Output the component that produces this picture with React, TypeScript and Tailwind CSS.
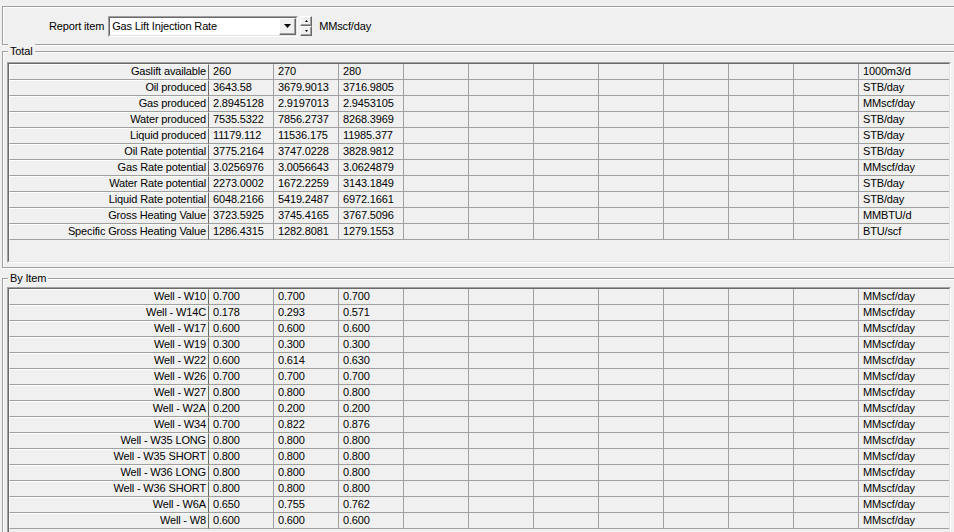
import React from "react"

const TOTAL_ROWS = [
    { label: "Gaslift available", values: ["260", "270", "280"], unit: "1000m3/d" },
    { label: "Oil produced", values: ["3643.58", "3679.9013", "3716.9805"], unit: "STB/day" },
    { label: "Gas produced", values: ["2.8945128", "2.9197013", "2.9453105"], unit: "MMscf/day" },
    { label: "Water produced", values: ["7535.5322", "7856.2737", "8268.3969"], unit: "STB/day" },
    { label: "Liquid produced", values: ["11179.112", "11536.175", "11985.377"], unit: "STB/day" },
    { label: "Oil Rate potential", values: ["3775.2164", "3747.0228", "3828.9812"], unit: "STB/day" },
    { label: "Gas Rate potential", values: ["3.0256976", "3.0056643", "3.0624879"], unit: "MMscf/day" },
    { label: "Water Rate potential", values: ["2273.0002", "1672.2259", "3143.1849"], unit: "STB/day" },
    { label: "Liquid Rate potential", values: ["6048.2166", "5419.2487", "6972.1661"], unit: "STB/day" },
    { label: "Gross Heating Value", values: ["3723.5925", "3745.4165", "3767.5096"], unit: "MMBTU/d" },
    { label: "Specific Gross Heating Value", values: ["1286.4315", "1282.8081", "1279.1553"], unit: "BTU/scf" },
]

const ITEM_ROWS = [
    { label: "Well - W10", values: ["0.700", "0.700", "0.700"] },
    { label: "Well - W14C", values: ["0.178", "0.293", "0.571"] },
    { label: "Well - W17", values: ["0.600", "0.600", "0.600"] },
    { label: "Well - W19", values: ["0.300", "0.300", "0.300"] },
    { label: "Well - W22", values: ["0.600", "0.614", "0.630"] },
    { label: "Well - W26", values: ["0.700", "0.700", "0.700"] },
    { label: "Well - W27", values: ["0.800", "0.800", "0.800"] },
    { label: "Well - W2A", values: ["0.200", "0.200", "0.200"] },
    { label: "Well - W34", values: ["0.700", "0.822", "0.876"] },
    { label: "Well - W35 LONG", values: ["0.800", "0.800", "0.800"] },
    { label: "Well - W35 SHORT", values: ["0.800", "0.800", "0.800"] },
    { label: "Well - W36 LONG", values: ["0.800", "0.800", "0.800"] },
    { label: "Well - W36 SHORT", values: ["0.800", "0.800", "0.800"] },
    { label: "Well - W6A", values: ["0.650", "0.755", "0.762"] },
    { label: "Well - W8", values: ["0.600", "0.600", "0.600"] },
].map((r) => ({ ...r, unit: "MMscf/day" }))

type Row = { label: string; values: string[]; unit: string }

function GridRow({ row }: { row: Row }) {
    const cells = Array.from({ length: 10 }, (_, i) => row.values[i] ?? "")
    return (
        <div className="flex h-[16px]">
            <div className="w-[200px] h-[16px] shrink-0 border-t border-l border-b border-r border-t-white border-l-white border-b-[#a0a0a0] border-r-[#696969] text-right pr-[2px] leading-[13px] whitespace-nowrap">
                {row.label}
            </div>
            {cells.map((v, i) => (
                <div key={i} className="w-[65px] h-[16px] shrink-0 border-r border-b border-[#a0a0a0] pl-[4px] leading-[14px]">
                    {v}
                </div>
            ))}
            <div className="w-[90px] h-[16px] shrink-0 border-b border-[#a0a0a0] pl-[4px] leading-[14px]">
                {row.unit}
            </div>
        </div>
    )
}

function Grid({ rows, height }: { rows: Row[]; height: string }) {
    return (
        <div className={`w-[944px] ${height} border border-[#a0a0a0] border-b-white border-r-white overflow-hidden`}>
            <div className="h-full border border-[#696969] border-b-[#e3e3e3] border-r-[#e3e3e3]">
                {rows.map((r, i) => (
                    <GridRow key={i} row={r} />
                ))}
            </div>
        </div>
    )
}

function GroupBox({ title, children, className }: { title: string; children: React.ReactNode; className: string }) {
    return (
        <div className={`relative w-[970px] border border-[#a0a0a0] shadow-[inset_1px_1px_0_#ffffff,1px_1px_0_#ffffff] ${className}`}>
            <span className="absolute left-[5px] top-[-8px] bg-[#f0f0f0] px-[2px] leading-[14px]">{title}</span>
            {children}
        </div>
    )
}

function Raised({ className, children }: { className: string; children?: React.ReactNode }) {
    return (
        <div className={`flex items-center justify-center bg-[#f0f0f0] border border-t-white border-l-white border-b-[#696969] border-r-[#696969] shadow-[inset_-1px_-1px_0_#a0a0a0] ${className}`}>
            {children}
        </div>
    )
}

export default function App() {
    return (
        <div className="w-[954px] h-[532px] overflow-hidden bg-[#f0f0f0] font-['Liberation_Sans',Arial,sans-serif] text-[11px] tracking-[-0.15px] text-black pt-[6px] pl-[2px]">
            {/* report item bar */}
            <div className="w-[970px] h-[39px] border border-[#a0a0a0] shadow-[inset_1px_1px_0_#ffffff,1px_1px_0_#ffffff] flex items-center pl-[46px] pt-[1px]">
                <span>Report item</span>
                <div className="ml-[4px] w-[190px] h-[21px] border border-[#a0a0a0] border-b-white border-r-white">
                    <div className="h-full border border-[#696969] border-b-[#e3e3e3] border-r-[#e3e3e3] bg-white flex items-center">
                        <span className="pl-[2px] flex-1 leading-[15px]">Gas Lift Injection Rate</span>
                        <Raised className="w-[17px] h-[17px]">
                            <svg width="7" height="4" viewBox="0 0 7 4"><path d="M0 0h7L3.5 4z" fill="#000" /></svg>
                        </Raised>
                    </div>
                </div>
                <div className="ml-[2px] flex flex-col">
                    <Raised className="w-[12px] h-[10px]">
                        <svg width="3" height="2" viewBox="0 0 3 2"><path d="M1.5 0L3 2H0z" fill="#000" /></svg>
                    </Raised>
                    <Raised className="w-[12px] h-[10px]">
                        <svg width="3" height="2" viewBox="0 0 3 2"><path d="M0 0h3L1.5 2z" fill="#000" /></svg>
                    </Raised>
                </div>
                <span className="ml-[7px]">MMscf/day</span>
            </div>

            <GroupBox title="Total" className="mt-[6px] h-[217px] pt-[10px] pl-[4px]">
                <Grid rows={TOTAL_ROWS} height="h-[201px]" />
            </GroupBox>

            <GroupBox title="By Item" className="mt-[10px] h-[300px] pt-[8px] pl-[4px]">
                <Grid rows={ITEM_ROWS} height="h-[290px]" />
            </GroupBox>
        </div>
    )
}
